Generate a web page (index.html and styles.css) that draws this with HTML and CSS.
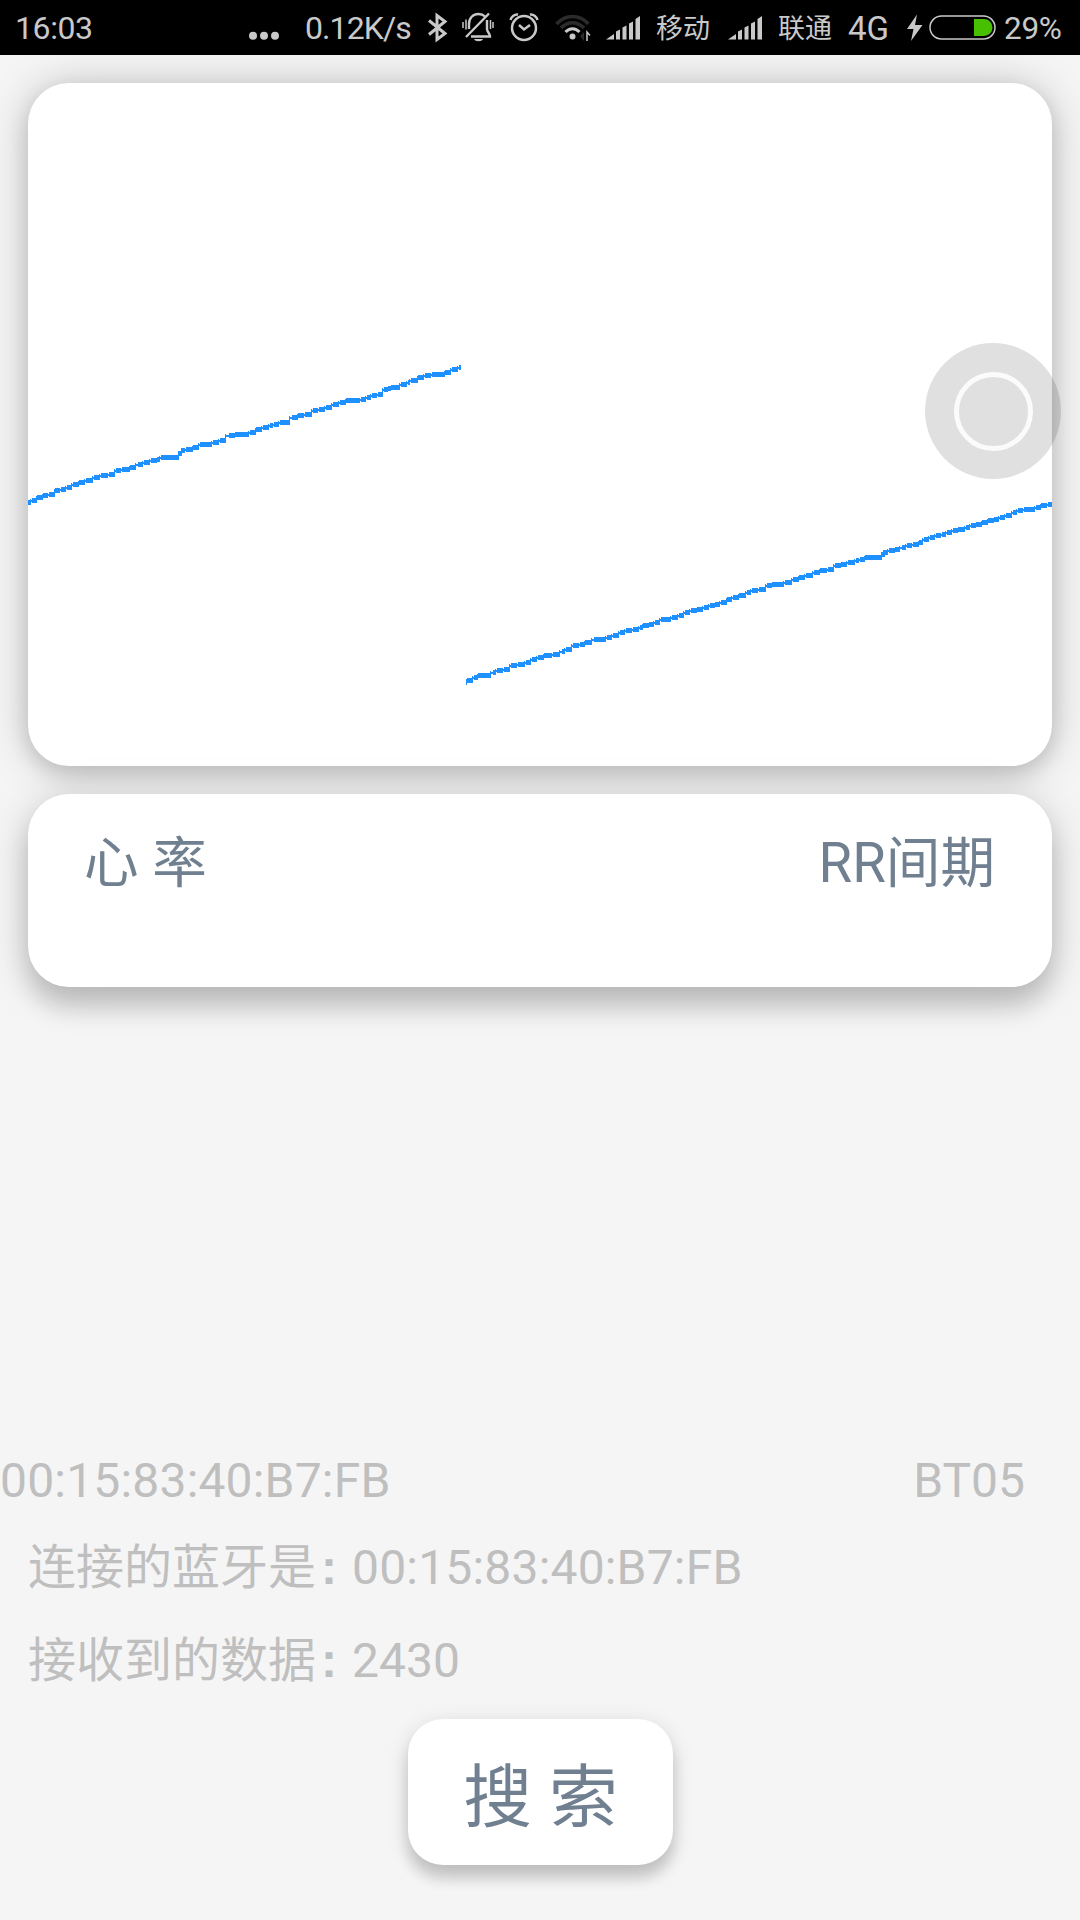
FILE: index.html
```html
<!DOCTYPE html>
<html lang="zh-CN">
<head>
<meta charset="utf-8">
<title>心率</title>
<link rel="stylesheet" href="styles.css">
</head>
<body>
<header class="status">
  <span class="clock">16:03</span>
  <svg class="ic dots" width="30" height="55" viewBox="249 0 30 55"><circle cx="253" cy="35.7" r="4"/><circle cx="264" cy="35.7" r="4"/><circle cx="275" cy="35.7" r="4"/></svg>
  <span class="rate">0.12K/s</span>
  <svg class="ic line bt" width="20" height="55" viewBox="428 0 20 55"><path d="M429 20.500l16 13-8 6V15.500l8 6L429 34.500" stroke-width="3"/></svg>
  <svg class="ic line mute" width="34" height="55" viewBox="461 0 34 55"><path d="M466 37L489 13.500M469 29v-5c0-6 4-10 9.500-10 3 0 5 1 6.500 2.500M487 20v9c0 3 3 4 3 7.500H471" stroke-width="2.400"/><path d="M463 22v6M466 19.500v10M490.500 20v9M493 22v6" stroke-width="1.500"/><path class="solid" d="M474 39h9c-1 3-8 3-9 0z"/></svg>
  <svg class="ic line alarm" width="32" height="55" viewBox="508 0 32 55"><circle cx="524" cy="28" r="12" stroke-width="2.500"/><path d="M519 25l5 4.500 6-4.500M510.500 20c.5-3 4-6 7.500-5.500M537.500 20c-.5-3-4-6-7.500-5.500" stroke-width="2.500"/></svg>
  <svg class="ic line wifi" width="37" height="55" viewBox="555 0 37 55"><path class="dim" d="M556.500 24c9-10 23-10 32 0M561 28c7-7 16-7 23 0" stroke-width="3.500"/><path d="M565.500 32c4-4.500 10-4.500 14 0" stroke-width="3"/><circle class="solid" cx="572.500" cy="36.500" r="3"/><path class="dim solid" d="M580 36l4-4v9z"/><path d="M587 41V32l3 3.500" stroke-width="1.500"/></svg>
  <svg class="ic sig" width="35" height="55" viewBox="606 0 35 55"><path d="M606 39.500l8-5.500v5.500zM616 31.500l4-2v10h-4zM622.500 27.500l4-2v14h-4zM629 23.500l4-2v18h-4zM635.500 19l4.500-3v23.500h-4.500z"/></svg>
  <span class="carrier one">移动</span>
  <svg class="ic sig two" width="35" height="55" viewBox="606 0 35 55"><path d="M606 39.500l8-5.500v5.500zM616 31.500l4-2v10h-4zM622.500 27.500l4-2v14h-4zM629 23.500l4-2v18h-4zM635.500 19l4.500-3v23.500h-4.500z"/></svg>
  <span class="carrier">联通</span>
  <span class="net">4G</span>
  <svg class="ic bolt" width="17" height="55" viewBox="906 0 17 55"><path d="M917 14.500L907 29h6.500L911 41l11.500-16h-7.500z"/></svg>
  <svg class="ic line battery" width="67" height="55" viewBox="929 0 67 55"><rect x="930" y="16" width="65" height="23" rx="11.500" stroke-width="1.500"/><path class="charge" d="M974 19h10a8.500 8.500 0 0 1 0 17h-10z"/></svg>
  <span class="pct">29%</span>
</header>
<main class="page">
  <section class="card chart"><svg id="wave" width="1024" height="683" viewBox="28 83 1024 683" shape-rendering="crispEdges"></svg></section>
  <section class="card stats"><span>心 率</span><span>RR间期</span></section>
  <div class="device"><span class="mac">00:15:83:40:B7:FB</span><span>BT05</span></div>
  <p class="info">连接的蓝牙是<span class="colon">:</span><span class="mac">00:15:83:40:B7:FB</span></p>
  <p class="info received">接收到的数据<span class="colon">:</span>2430</p>
  <button class="search">搜 索</button>
</main>
<div class="assist"></div>
<script src="wave.js"></script>
</body>
</html>
```
FILE: styles.css
```css
* { box-sizing: border-box; }
body {
  margin: 0;
  width: 1080px;
  height: 1920px;
  overflow: hidden;
  position: relative;
  display: flex;
  flex-direction: column;
  background: #f5f5f5;
  font-family: Roboto, "Noto Sans CJK SC", sans-serif;
}
.status {
  flex: none;
  height: 55px;
  display: flex;
  align-items: center;
  background: #000;
  color: #c9c9c9;
  font-size: 32px;
  line-height: 55px;
  white-space: nowrap;
  position: relative;
  z-index: 2;
}
.status > * { flex: none; }
.ic { display: block; fill: #c9c9c9; }
.line { fill: none; stroke: #c9c9c9; }
.solid { fill: #c9c9c9; stroke: none; }
.dim { stroke: #2b2b2b; }
.dim.solid { fill: #2b2b2b; stroke: none; }
.charge { fill: #46c000; stroke: none; }
.clock { width: 233px; padding: 1px 0 0 15px; letter-spacing: -.4px; }
.dots { margin-left: 16px; }
.rate { width: 122px; margin-left: 26px; padding-top: 1px; letter-spacing: -.9px; }
.bt { margin-left: 1px; }
.mute { margin-left: 13px; }
.alarm { margin-left: 13px; }
.wifi { margin-left: 15px; }
.sig { margin-left: 14px; }
.sig.two { margin-left: 15px; }
.carrier { width: 70px; margin-left: 15px; padding-top: 4px; font-size: 27px; }
.carrier.one { width: 57px; }
.net { width: 58px; padding-top: 1px; font-size: 33px; }
.battery { margin-left: 6px; }
.pct { margin-left: 8px; padding-top: 1px; font-size: 31.5px; letter-spacing: -.3px; }

.page {
  flex: 1;
  display: flex;
  flex-direction: column;
  padding-top: 28px;
}
.card {
  flex: none;
  margin: 0 28px;
  background: #fff;
  border-radius: 41px;
}
.chart {
  height: 683px;
  box-shadow: 0 8px 20px rgba(0, 0, 0, .12), 0 2px 44px rgba(0, 0, 0, .21);
}
.chart svg { display: block; }
.wave { fill: #1e90ff; }
.stats {
  height: 193px;
  margin-top: 28px;
  padding: 29px 57px 0 56px;
  display: flex;
  justify-content: space-between;
  color: #708090;
  font-size: 54.6px;
  line-height: 80px;
  box-shadow: 0 20px 24px rgba(0, 0, 0, .15), 0 6px 44px rgba(0, 0, 0, .18);
}
.device {
  margin-top: 462px;
  padding-right: 55px;
  display: flex;
  justify-content: space-between;
  color: #bfbfbf;
  font-size: 48px;
  line-height: 64px;
}
.mac { letter-spacing: .19px; }
.info {
  margin: 23px 28px 0;
  color: #bfbfbf;
  font-size: 48px;
  line-height: 64px;
}
.received { margin-top: 29px; }
.colon {
  display: inline-block;
  width: 36px;
  padding-left: 5px;
  font: bold 48px/50px "Liberation Sans", sans-serif;
}
.search {
  width: 265px;
  height: 146px;
  margin: 26px 0 0 408px;
  padding: 14px 0 0;
  border: 0;
  border-radius: 35px;
  background: #fff;
  color: #708090;
  font: 68.75px/132px Roboto, "Noto Sans CJK SC", sans-serif;
  box-shadow: 0 14px 14px rgba(0, 0, 0, .14), 0 5px 22px rgba(0, 0, 0, .13);
}
.assist {
  position: absolute;
  left: 925px;
  top: 343px;
  width: 136px;
  height: 136px;
  border-radius: 50%;
  background: rgba(0, 0, 0, .12);
}
.assist::before {
  content: "";
  box-sizing: border-box;
  position: absolute;
  left: 29px;
  top: 29px;
  width: 79px;
  height: 79px;
  border: 5px solid rgba(255, 255, 255, .85);
  border-radius: 50%;
}
```
FILE: wave.js
```js
// Each sample run is: start x, end x, y, in sampling units of its sweep.
const sweeps = [
  { x: 0, y: 340, sx: 1 / 3, sy: 1 / 3, runs: [
    84,93,487, 96,111,481, 111,129,472, 129,144,466, 147,165,463, 165,180,451, 183,198,448, 201,216,442,
    219,237,433, 237,255,427, 258,279,421, 282,300,412, 303,324,406, 327,345,403, 348,363,391, 366,390,388,
    390,408,382, 414,429,373, 432,450,367, 453,471,361, 471,480,358, 483,537,352, 534,546,340, 543,555,331,
    558,579,328, 579,597,322, 600,636,313, 639,657,307, 660,678,301, 687,705,286, 705,747,283, 750,768,277,
    768,786,268, 789,807,262, 810,819,256, 822,837,253, 840,870,247, 876,894,232, 894,912,226, 915,936,223,
    939,954,211, 957,975,208, 978,996,202, 999,1017,193, 1020,1038,187, 1038,1080,181, 1083,1098,178,
    1101,1113,172, 1116,1131,166, 1134,1149,163, 1152,1164,148, 1164,1173,145, 1173,1200,142, 1203,1221,133,
    1224,1230,127, 1233,1254,121, 1254,1272,112, 1275,1293,106, 1296,1335,103, 1335,1353,97, 1356,1374,88,
    1377,1383,82 ] },
  { x: 450, y: 480, sx: 630 / 1568, sy: 1 / 3, runs: [
    40,42,607, 42,57,600, 60,70,592, 70,102,587, 107,114,577, 117,132,571, 135,149,568, 152,167,556, 169,187,553,
    190,202,547, 204,217,538, 220,234,532, 234,254,526, 257,274,523, 279,286,514, 289,304,508, 306,321,496,
    324,337,493, 337,353,487, 358,388,478, 391,403,472, 406,420,466, 423,436,457, 438,453,451, 455,470,448,
    473,480,442, 480,495,436, 495,508,433, 510,523,427, 526,550,418, 553,567,412, 570,582,406, 585,597,397,
    600,615,391, 615,630,388, 632,645,382, 647,660,376, 660,672,373, 674,689,367, 689,701,358, 704,719,352,
    719,737,346, 739,749,337, 752,767,331, 769,786,328, 789,801,316, 801,831,313, 834,851,307, 854,869,298,
    869,884,292, 886,903,286, 906,920,277, 920,938,271, 941,956,268, 958,972,256, 973,988,253, 991,1008,247,
    1011,1018,241, 1020,1033,238, 1033,1075,232, 1072,1083,223, 1078,1090,216, 1093,1108,211, 1108,1121,208,
    1125,1135,202, 1137,1150,196, 1152,1167,193, 1167,1177,187, 1180,1192,178, 1195,1207,172, 1210,1222,166,
    1225,1234,163, 1237,1249,157, 1252,1264,151, 1264,1282,148, 1284,1294,142, 1297,1309,136, 1309,1324,132,
    1324,1338,127, 1338,1353,121, 1353,1366,118, 1369,1381,112, 1384,1399,106, 1401,1411,97, 1414,1426,91,
    1429,1456,88, 1458,1472,82, 1472,1486,76, 1488,1498,73 ] }
];
const box = (x, y, w, h) => `M${x} ${y}h${w}v${h}h${-w}z`;
let d = "";
for (const s of sweeps) {
  let prev = null;
  for (let i = 0; i < s.runs.length; i += 3) {
    const a = Math.round(s.x + s.runs[i] * s.sx);
    const b = Math.round(s.x + s.runs[i + 1] * s.sx);
    const y = Math.round(s.y + s.runs[i + 2] * s.sy - 2.5);
    d += box(a, y, b - a, 5);
    // thin step joining two neighbouring runs
    if (prev) {
      const top = Math.min(y + 2, prev.y + 1);
      d += box(prev.b - 1, top, Math.max(a - prev.b + 1, 2), 2);
      d += box(prev.b - 1, top - 1, 1, prev.y + 3 - top);
    }
    prev = { b, y };
  }
}
const path = document.createElementNS("http://www.w3.org/2000/svg", "path");
path.setAttribute("class", "wave");
path.setAttribute("d", d);
document.getElementById("wave").appendChild(path);
```
